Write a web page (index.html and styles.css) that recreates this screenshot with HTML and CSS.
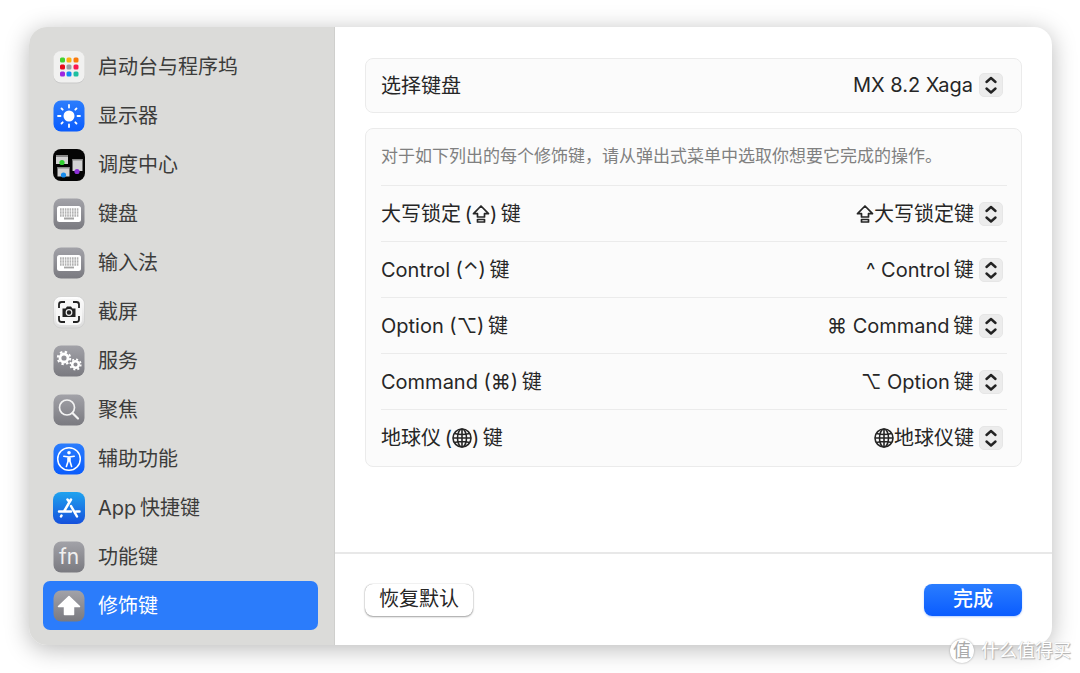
FILE: index.html
```
<!DOCTYPE html>
<html lang="zh-CN">
<head>
    <meta charset="UTF-8">
    <meta name="viewport" content="width=device-width, initial-scale=1.0">
    <title>修饰键</title>
    <link rel="stylesheet" href="styles.css">
</head>
<body>
    <!-- 共用图形 -->
    <svg class="defs" aria-hidden="true">
        <defs>
            <linearGradient id="gray" x1="0" y1="0" x2="0" y2="1"><stop offset="0" stop-color="#a2a2a8"/><stop offset="1" stop-color="#7a7a80"/></linearGradient>
            <linearGradient id="blue" x1="0" y1="0" x2="0" y2="1"><stop offset="0" stop-color="#2b7dfd"/><stop offset="1" stop-color="#0a5cfd"/></linearGradient>
            <linearGradient id="store" x1="0" y1="0" x2="0" y2="1"><stop offset="0" stop-color="#1fa3ef"/><stop offset="1" stop-color="#1550dc"/></linearGradient>
            <linearGradient id="light" x1="0" y1="0" x2="0" y2="1"><stop offset="0" stop-color="#fff"/><stop offset="1" stop-color="#dcdcdc"/></linearGradient>
        </defs>
        <symbol id="stepper" viewBox="0 0 24 24">
            <rect x=".5" y=".5" width="23" height="23" rx="4.5" fill="#ececec" stroke="#e6e6e6"/>
            <path d="M7.500 9 12 5l4.500 4M7.500 15.500 12 19.500l4.500-4" fill="none" stroke="#222" stroke-width="2.400" stroke-linecap="round" stroke-linejoin="round"/>
        </symbol>
        <symbol id="caps" viewBox="0 0 18 20">
            <path d="M9 2 16.500 9.700H12.500V13H5.500V9.700H1.500Z M5.500 15.500h7v2.500h-7z" fill="none" stroke="#262626" stroke-width="1.700" stroke-linejoin="round"/>
        </symbol>
        <symbol id="globe" viewBox="0 0 20 20">
            <g fill="none" stroke="#262626" stroke-width="1.600">
                <circle cx="10" cy="10" r="9"/><ellipse cx="10" cy="10" rx="4.500" ry="9"/>
                <path d="M10 1v18M1 10h18M2.500 5.500q7.500 2 15 0M2.500 14.500q7.500-2 15 0"/>
            </g>
        </symbol>
        <symbol id="keyboard" viewBox="0 0 32 32">
            <rect x=".5" y=".5" width="31" height="31" rx="7.500" fill="url(#gray)"/>
            <rect x="4" y="8" width="24" height="16" rx="2.500" fill="#fff"/>
            <path d="M7 11.500h18.500M7 14.500h18.500M7 17.500h18.500" stroke="#b2b2b2" stroke-width="2.400" stroke-dasharray="1.600 .8"/>
            <path d="M11 20.500h10" stroke="#a5a5a5" stroke-width="1.800"/>
        </symbol>
    </svg>

    <div class="window">
        <nav class="sidebar">
            <a class="item" href="#">
                <svg class="icon" viewBox="0 0 32 32"><rect x=".5" y=".5" width="31" height="32" rx="7.500" fill="#c9c9c9"/><rect x=".5" y="0" width="31" height="31.500" rx="7.500" fill="#f1f1f0"/>
                    <g><rect x="7" y="6.500" width="5" height="5" rx="1.500" fill="#43d12f"/><rect x="13.500" y="6.500" width="5" height="5" rx="1.500" fill="#fbb010"/><rect x="20.500" y="6.500" width="5" height="5" rx="1.500" fill="#f97a0a"/>
                    <rect x="7" y="13.500" width="5" height="5" rx="1.500" fill="#e80b1a"/><rect x="13.500" y="13.500" width="5" height="5" rx="1.500" fill="#9a9fa3"/><rect x="20.500" y="13.500" width="5" height="5" rx="1.500" fill="#fa1650"/>
                    <rect x="7" y="20.500" width="5" height="5" rx="1.500" fill="#9c27e0"/><rect x="13.500" y="20.500" width="5" height="5" rx="1.500" fill="#108bf2"/><rect x="20.500" y="20.500" width="5" height="5" rx="1.500" fill="#1fc0a0"/></g></svg>
                <span>启动台与程序坞</span>
            </a>
            <a class="item" href="#">
                <svg class="icon" viewBox="0 0 32 32"><rect x=".5" y=".5" width="31" height="31" rx="7.500" fill="url(#blue)"/><circle cx="16" cy="16" r="5.500" fill="#fff"/><path d="M16 5v2.500M16 24.500v2.500M5 16h2.500M24.500 16h2.500M8.500 8.500l1.200 1.200M22.300 22.300l1.200 1.200M8.500 23.500l1.200-1.200M22.300 9.700l1.200-1.200" stroke="#fff" stroke-width="1.800" stroke-linecap="round"/></svg>
                <span>显示器</span>
            </a>
            <a class="item" href="#">
                <svg class="icon" viewBox="0 0 32 32"><rect width="32" height="32" rx="8" fill="#050505"/><path d="M3 6h12v9H3zM4.500 18h12v9.500h-12zM19.500 10h10v12h-10z" fill="#d3d3d3"/><path d="M3 6h12v2H3zM4.500 18h12v1.500h-12zM19.500 10h10v1.500h-10z" fill="#888"/><circle cx="9" cy="13.500" r="2.600" fill="#31d131"/><circle cx="10.500" cy="26" r="2.600" fill="#168bed"/><circle cx="24" cy="22.500" r="2.600" fill="#8c2fd7"/></svg>
                <span>调度中心</span>
            </a>
            <a class="item" href="#">
                <svg class="icon"><use href="#keyboard"/></svg>
                <span>键盘</span>
            </a>
            <a class="item" href="#">
                <svg class="icon"><use href="#keyboard"/></svg>
                <span>输入法</span>
            </a>
            <a class="item" href="#">
                <svg class="icon" viewBox="0 0 32 32"><rect x=".5" y=".5" width="31" height="31.500" rx="7.500" fill="url(#light)" stroke="#c8c8c8" stroke-width=".6"/><rect x="3" y="3" width="26" height="26" rx="5" fill="#f7f7f7"/><path d="M6 12V8.500Q6 6 8.500 6H12M20 6h3.500Q26 6 26 8.500V12M26 20v3.500q0 2.500-2.500 2.500H20M12 26H8.500Q6 26 6 23.500V20" fill="none" stroke="#222" stroke-width="1.800"/><path d="M9.500 12.500h3l1.500-2h4l1.500 2h3v8.500h-13z" fill="#222"/><circle cx="16" cy="16.500" r="2.800" fill="none" stroke="#eee" stroke-width="1.200"/></svg>
                <span>截屏</span>
            </a>
            <a class="item" href="#">
                <svg class="icon" viewBox="0 0 32 32"><rect x=".5" y=".5" width="31" height="31" rx="7.500" fill="url(#gray)"/><g fill="none" stroke="#fff"><circle cx="11" cy="13" r="4" stroke-width="2.800"/><circle cx="11" cy="13" r="6.200" stroke-width="2" stroke-dasharray="2.400 2.470"/><circle cx="22.500" cy="19.500" r="3.300" stroke-width="2.500"/><circle cx="22.500" cy="19.500" r="5.200" stroke-width="1.800" stroke-dasharray="2 2.080"/></g></svg>
                <span>服务</span>
            </a>
            <a class="item" href="#">
                <svg class="icon" viewBox="0 0 32 32"><rect x=".5" y=".5" width="31" height="31" rx="7.500" fill="url(#gray)"/><circle cx="14" cy="13.500" r="7.500" fill="none" stroke="#f3f3f3" stroke-width="1.700"/><path d="m19.500 19 5.500 5.500" stroke="#f3f3f3" stroke-width="2.200" stroke-linecap="round"/></svg>
                <span>聚焦</span>
            </a>
            <a class="item" href="#">
                <svg class="icon" viewBox="0 0 32 32"><rect x=".5" y=".5" width="31" height="31" rx="7.500" fill="url(#blue)"/><circle cx="16" cy="16" r="11.300" fill="none" stroke="#fff" stroke-width="1.500"/><circle cx="16" cy="9.800" r="1.800" fill="#fff"/><path d="M10.800 13.300 16 14l5.200-.7M16 14.500v3.500M15 14.500v4l-1.600 5M17 14.500v4l1.600 5" fill="none" stroke="#fff" stroke-width="1.600" stroke-linecap="round" stroke-linejoin="round"/></svg>
                <span>辅助功能</span>
            </a>
            <a class="item" href="#">
                <svg class="icon" viewBox="0 0 32 32"><rect width="32" height="32" rx="8" fill="url(#store)"/><path d="M6 19.500h12M23 19.500H26.500M18 7.500 11 19.500M8.500 23.500l-.5 1M14.500 7.500 16 9.500M18 14l6 10.500" fill="none" stroke="#fff" stroke-width="2.500" stroke-linecap="round"/></svg>
                <span>App&thinsp;快捷键</span>
            </a>
            <a class="item" href="#">
                <svg class="icon" viewBox="0 0 32 32"><rect x=".5" y=".5" width="31" height="31" rx="7.500" fill="url(#gray)"/><text class="fn" x="16" y="23" text-anchor="middle">fn</text></svg>
                <span>功能键</span>
            </a>
            <a class="item active" href="#" aria-current="page">
                <svg class="icon" viewBox="0 0 32 32"><rect x=".5" y=".5" width="31" height="31" rx="7.500" fill="url(#gray)"/><path d="M16 6.500 26.500 16.500H20.500v8H11.500V16.500H5.500Z" fill="#fff" stroke="#fff" stroke-width="1.500" stroke-linejoin="round"/></svg>
                <span>修饰键</span>
            </a>
        </nav>

        <main class="content">
            <form class="settings">
                <section class="card">
                    <div class="row">
                        <label for="device">选择键盘</label>
                        <div class="picker">
                            <select id="device"><option>MX 8.2 Xaga</option></select>
                            <svg class="stepper"><use href="#stepper"/></svg>
                        </div>
                    </div>
                </section>

                <section class="card">
                    <p class="note">对于如下列出的每个修饰键，请从弹出式菜单中选取你想要它完成的操作。</p>
                    <div class="row">
                        <label for="capsKey">大写锁定&thinsp;(<svg class="caps"><use href="#caps"/></svg>)&thinsp;键</label>
                        <div class="picker">
                            <svg class="caps"><use href="#caps"/></svg>
                            <select id="capsKey"><option>大写锁定键</option></select>
                            <svg class="stepper"><use href="#stepper"/></svg>
                        </div>
                    </div>
                    <div class="row">
                        <label for="controlKey">Control (⌃)&thinsp;键</label>
                        <div class="picker">
                            <select id="controlKey"><option>^ Control&thinsp;键</option></select>
                            <svg class="stepper"><use href="#stepper"/></svg>
                        </div>
                    </div>
                    <div class="row">
                        <label for="optionKey">Option (⌥)&thinsp;键</label>
                        <div class="picker">
                            <select id="optionKey"><option>⌘ Command&thinsp;键</option></select>
                            <svg class="stepper"><use href="#stepper"/></svg>
                        </div>
                    </div>
                    <div class="row">
                        <label for="commandKey">Command (⌘)&thinsp;键</label>
                        <div class="picker">
                            <select id="commandKey"><option>⌥ Option&thinsp;键</option></select>
                            <svg class="stepper"><use href="#stepper"/></svg>
                        </div>
                    </div>
                    <div class="row">
                        <label for="globeKey">地球仪&thinsp;(<svg class="globe"><use href="#globe"/></svg>)&thinsp;键</label>
                        <div class="picker">
                            <svg class="globe"><use href="#globe"/></svg>
                            <select id="globeKey"><option>地球仪键</option></select>
                            <svg class="stepper"><use href="#stepper"/></svg>
                        </div>
                    </div>
                </section>
            </form>

            <footer class="footer">
                <button class="button" type="button">恢复默认</button>
                <button class="button primary" type="button">完成</button>
            </footer>
        </main>
    </div>

    <div class="watermark"><span class="badge">值</span>什么值得买</div>
</body>
</html>
```
FILE: styles.css
```
* {
    box-sizing: border-box;
}

body {
    margin: 0;
    min-height: 100vh;
    padding: 27px 28px 28px 29px;
    display: flex;
    background: #fff;
    color: #262626;
    font-family: Inter, "Noto Sans CJK SC", "DejaVu Sans", sans-serif;
    font-size: 20px;
    line-height: 24px;
}

.defs {
    position: absolute;
    width: 0;
    height: 0;
}

.window {
    flex: 1;
    display: flex;
    border-radius: 18px;
    overflow: hidden;
    background: #fff;
    box-shadow: 0 4px 24px rgba(0, 0, 0, 0.28);
}

/* 侧边栏 */
.sidebar {
    flex: 0 0 306px;
    padding: 15px 16px 15px 14px;
    background: #dbdbd9;
    border-right: 1px solid #cfcfcd;
}

.item {
    display: flex;
    align-items: center;
    gap: 13px;
    height: 49px;
    padding: 1px 9px 0 10px;
    border-radius: 7px;
    color: #3c3c3b;
    text-decoration: none;
}

.item.active {
    background: #2b7cfb;
    color: #fff;
}

.icon {
    flex: none;
    width: 32px;
    height: 32px;
    overflow: visible;
}

.fn {
    fill: #f0f0f0;
    font-size: 21px;
}

/* 右侧内容 */
.content {
    flex: 1;
    min-width: 0;
    display: flex;
    flex-direction: column;
}

.settings {
    flex: 1;
    display: flex;
    flex-direction: column;
    gap: 15px;
    padding: 31px 30px 30px;
}

.card {
    padding: 0 14px 1px 15px;
    background: #fbfbfb;
    border: 1px solid #ebebeb;
    border-radius: 8px;
}

.note {
    margin: 0;
    padding: 15px 0 17px;
    color: #808080;
    font-size: 17px;
}

.row {
    display: flex;
    align-items: center;
    justify-content: space-between;
    min-height: 56px;
    padding-right: 4px;
    border-top: 1px solid #ebebeb;
}

.row:first-child {
    min-height: 52px;
    border-top: 0;
}

.row label {
    padding-top: 1px;
}

.picker {
    position: relative;
    display: flex;
    align-items: center;
}

.picker select {
    appearance: none;
    margin: 0;
    padding: 0 29px 0 0;
    border: 0;
    background: none;
    color: inherit;
    font: inherit;
}

/* 箭头盖在下拉框右侧 */
.stepper {
    position: absolute;
    right: 0;
    width: 24px;
    height: 24px;
    pointer-events: none;
}

.caps {
    width: 18px;
    height: 20px;
}

.globe {
    width: 20px;
    height: 20px;
}

label .caps,
label .globe {
    vertical-align: -3px;
}

.footer {
    display: flex;
    align-items: center;
    justify-content: space-between;
    height: 93px;
    padding: 0 30px;
    border-top: 2px solid #e8e8e8;
}

.button {
    min-width: 98px;
    height: 32px;
    padding: 0 14px 1px;
    border: 0;
    border-radius: 8px;
    background: #fff;
    box-shadow: 0 0 1px rgba(0, 0, 0, 0.4), 0 1px 2px rgba(0, 0, 0, 0.35);
    color: #262626;
    font-family: inherit;
    font-size: 20px;
    line-height: 28px;
}

.button.primary {
    background: linear-gradient(#2a7dff, #0a5cff);
    box-shadow: 0 1px 2px rgba(10, 92, 255, 0.3);
    color: #fff;
    font-weight: 500;
}

/* 水印 */
.watermark {
    position: absolute;
    right: 9px;
    bottom: 10px;
    display: flex;
    align-items: center;
    gap: 7px;
    color: #fff;
    font-size: 18px;
    text-shadow: 0 0 1px #bbb, 1px 1px 1px #aaa;
}

.badge {
    width: 24px;
    border-radius: 50%;
    background: #fff;
    box-shadow: 0 0 2px #999;
    color: #aaa;
    text-align: center;
    text-shadow: none;
}
```
